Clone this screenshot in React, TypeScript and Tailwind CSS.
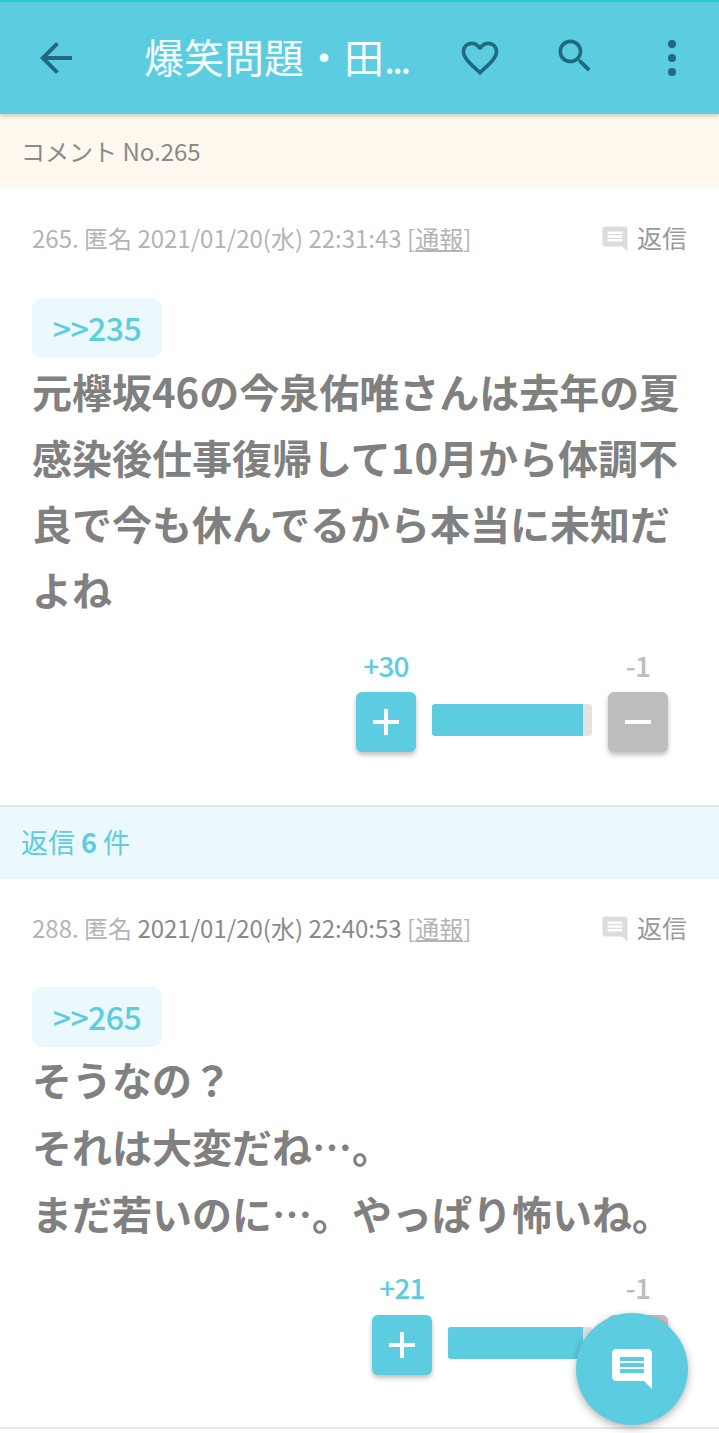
import React from "react";

const jp = { fontFamily: '"Noto Sans CJK JP", "Noto Sans", sans-serif' };

function CommentIcon({ className, color }: { className: string; color: string }) {
  return (
    <svg viewBox="0 0 24 24" className={className}>
      <path
        fill={color}
        d="M21.99 4c0-1.1-.89-2-1.99-2H4c-1.1 0-2 .9-2 2v12c0 1.1.9 2 2 2h14l4 4-.01-18zM18 14H6v-2h12v2zm0-3H6V9h12v2zm0-3H6V6h12v2z"
      />
    </svg>
  );
}

function HeaderIcon({ d, className }: { d: string; className: string }) {
  return (
    <svg viewBox="0 0 24 24" className={className}>
      <path fill="#1f6a80" d={d} />
    </svg>
  );
}

type CommentProps = {
  no: string;
  date: string;
  dateColor: string;
  anchor: string;
  lines: string[];
  lineClass: string;
  rowClass: string;
};

function Comment(p: CommentProps) {
  return (
    <div className="flex flex-col px-[32px]">
      <div className={`flex h-[50px] items-center justify-between ${p.rowClass}`}>
        <div className="whitespace-nowrap text-[24px] text-[#b4b4b4]">
          {p.no}. 匿名 <span className={p.dateColor}>{p.date}</span>{" "}
          <span>
            [<span className="underline">通報</span>]
          </span>
        </div>
        <div className="flex items-center gap-[7px] text-[25px] text-[#9a9a9a]">
          <CommentIcon className="mt-[2px] h-[30px] w-[30px]" color="#dcdcdc" />
          返信
        </div>
      </div>
      <div className="mt-[35px] flex h-[60px] w-[130px] items-center justify-center rounded-[10px] bg-[#ebf9fc] pb-[3px] text-[32px] font-medium tracking-[-0.5px] text-[#5ccde0]">
        {p.anchor}
      </div>
      <div className={`text-[40px] font-bold text-[#808080] ${p.lineClass}`}>
        {p.lines.map((l) => (
          <div key={l} className="whitespace-nowrap">
            {l}
          </div>
        ))}
      </div>
    </div>
  );
}

function Votes({ plus, bar, fill, gap }: { plus: string; bar: string; fill: string; gap: string }) {
  return (
    <div className="flex justify-end pr-[51px]">
      <div className="flex flex-col">
        <div className="flex h-[28px] items-center justify-between text-[28px] font-medium tracking-[-0.8px]">
          <span className="w-[60px] whitespace-nowrap text-center text-[#5ccde0]">{plus}</span>
          <span className="w-[60px] text-center text-[#bdbdbd]">-1</span>
        </div>
        <div className={`flex items-center gap-[16px] ${gap}`}>
          <div className="flex h-[60px] w-[60px] items-center justify-center rounded-[6px] bg-[#5ccde0] shadow-[0_3px_5px_rgba(0,0,0,0.25)]">
            <div className="relative h-[26px] w-[26px]">
              <div className="absolute left-0 top-[11px] h-[4px] w-[26px] bg-white" />
              <div className="absolute left-[11px] top-0 h-[26px] w-[4px] bg-white" />
            </div>
          </div>
          <div className={`mb-[4px] flex h-[32px] overflow-hidden rounded-[3px] bg-[#e2e2e2] ${bar}`}>
            <div className={`h-full bg-[#5ccde0] ${fill}`} />
          </div>
          <div className="flex h-[60px] w-[60px] items-center justify-center rounded-[6px] bg-[#bdbdbd] shadow-[0_3px_5px_rgba(0,0,0,0.25)]">
            <div className="h-[4px] w-[26px] bg-white" />
          </div>
        </div>
      </div>
    </div>
  );
}

export default function App() {
  return (
    <div className="relative h-[1433px] w-[719px] overflow-hidden bg-white" style={jp}>
      <header className="relative z-10 flex h-[114px] items-center border-t-2 border-[#2cc5d2] bg-[#5ccde0] shadow-[0_2px_4px_rgba(0,0,0,0.2)]">
        <HeaderIcon
          className="ml-[32px] h-[48px] w-[48px]"
          d="M20 11H7.83l5.59-5.59L12 4l-8 8 8 8 1.41-1.41L7.83 13H20v-2z"
        />
        <div className="mb-[4px] ml-[64px] w-[268px] whitespace-nowrap text-[40px] leading-none text-[#f4fdff]">
          爆笑問題・田<span className="tracking-[-3px]">...</span>
        </div>
        <HeaderIcon
          className="ml-[46px] h-[44px] w-[44px]"
          d="M16.5 3c-1.74 0-3.41.81-4.5 2.09C10.91 3.81 9.24 3 7.5 3 4.42 3 2 5.42 2 8.5c0 3.78 3.4 6.86 8.55 11.54L12 21.35l1.45-1.32C18.6 15.36 22 12.28 22 8.5 22 5.42 19.58 3 16.5 3zm-4.4 15.55l-.1.1-.1-.1C7.14 14.24 4 11.39 4 8.5 4 6.5 5.5 5 7.5 5c1.54 0 3.04.99 3.57 2.36h1.87C13.46 5.99 14.96 5 16.5 5c2 0 3.5 1.5 3.5 3.5 0 2.89-3.14 5.74-7.9 10.05z"
        />
        <HeaderIcon
          className="ml-[51px] mb-[4px] h-[44px] w-[44px]"
          d="M15.5 14h-.79l-.28-.27C15.41 12.59 16 11.11 16 9.5 16 5.91 13.09 3 9.5 3S3 5.91 3 9.5 5.91 16 9.5 16c1.61 0 3.09-.59 4.23-1.57l.27.28v.79l5 4.99L20.49 19l-4.99-5zm-6 0C7.01 14 5 11.99 5 9.5S7.01 5 9.5 5 14 7.01 14 9.5 11.99 14 9.5 14z"
        />
        <div className="ml-[71px] flex flex-col gap-[6px]">
          <div className="h-[8px] w-[8px] rounded-full bg-[#1f6a80]" />
          <div className="h-[8px] w-[8px] rounded-full bg-[#1f6a80]" />
          <div className="h-[8px] w-[8px] rounded-full bg-[#1f6a80]" />
        </div>
      </header>

      <div className="flex h-[74px] items-center bg-[#fff8ee] pl-[21px] text-[24px] text-[#8a8a8a]">
        コメント No.265
      </div>

      <div className="h-[617px] pt-[25px]">
        <Comment
          no="265"
          date="2021/01/20(水) 22:31:43"
          dateColor="text-[#b4b4b4]"
          anchor=">>235"
          lines={["元欅坂46の今泉佑唯さんは去年の夏", "感染後仕事復帰して10月から体調不", "良で今も休んでるから本当に未知だ", "よね"]}
          lineClass="leading-[66px]"
          rowClass=""
        />
        <div className="mt-[29px]">
          <Votes plus="+30" bar="w-[160px]" fill="w-[151px]" gap="mt-[13px]" />
        </div>
      </div>

      <div className="flex h-[74px] items-center border-t-2 border-[#e4e6ee] bg-[#ebf8fe] pb-[2px] pl-[21px] text-[27px] text-[#5ccde0]">
        返信&nbsp;<span className="font-bold">6</span>&nbsp;件
      </div>

      <div className="pt-[23px]">
        <Comment
          no="288"
          date="2021/01/20(水) 22:40:53"
          dateColor="text-[#8a8a8a]"
          anchor=">>265"
          lines={["そうなの？", "それは大変だね…。", "まだ若いのに…。やっぱり怖いね。"]}
          lineClass="-mt-[1px] leading-[67px]"
          rowClass="pt-[2px]"
        />
        <div className="mt-[26px]">
          <Votes plus="+21" bar="w-[144px]" fill="w-[135px]" gap="mt-[14px]" />
        </div>
      </div>

      <div className="absolute bottom-0 left-0 h-[6px] w-full border-t-2 border-[#e8e8e8] bg-white" />

      <div className="absolute left-[576px] top-[1313px] flex h-[112px] w-[112px] items-center justify-center rounded-full bg-[#5ccde0] shadow-[0_3px_8px_rgba(0,0,0,0.3)]">
        <CommentIcon className="h-[48px] w-[48px]" color="#ffffff" />
      </div>
    </div>
  );
}
